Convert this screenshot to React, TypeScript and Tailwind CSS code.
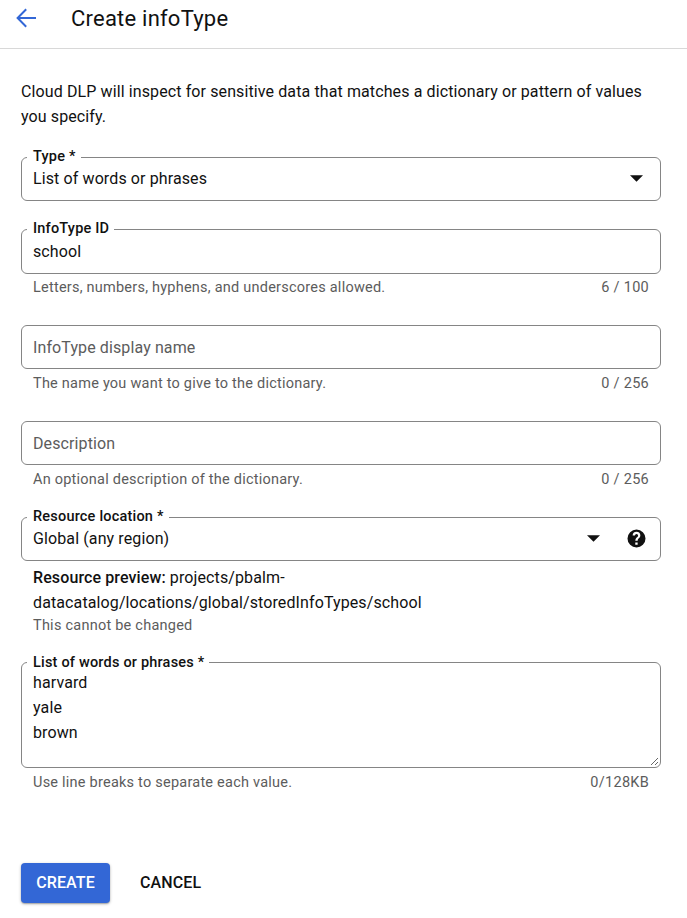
import type { ReactNode } from "react";

function Caret() {
  return (
    <svg width="13" height="7" viewBox="0 0 13 7" className="mb-px shrink-0 fill-[#111]">
      <path d="M0 0.3h13L6.5 6.7z" />
    </svg>
  );
}

type FieldProps = {
  label?: string;
  labelTop?: string;
  className: string;
  children: ReactNode;
};

function Field({ label, labelTop = "-top-[11px]", className, children }: FieldProps) {
  return (
    <div className={`relative rounded-[6px] border border-[#858585] pl-[11px] ${className}`}>
      {label && (
        <span
          className={`absolute left-[5px] bg-white pr-[5px] pl-1.5 text-[14.5px] leading-5 font-medium tracking-[0.2px] whitespace-nowrap ${labelTop}`}
        >
          {label}
        </span>
      )}
      {children}
    </div>
  );
}

function Hint({ left, right, className = "pt-1" }: { left: string; right: string; className?: string }) {
  return (
    <div className={`flex h-[25px] items-center justify-between px-3 text-[14.5px] text-[#5c5c5c] ${className}`}>
      <span className="tracking-[0.23px]">{left}</span>
      <span className="tracking-[0.28px]">{right}</span>
    </div>
  );
}

export default function App() {
  return (
    <div className="flex h-[918px] w-[687px] flex-col overflow-hidden bg-white font-[Roboto,sans-serif] text-[16px] tracking-[0.11px] text-[#111]">
      <header className="flex h-[49px] shrink-0 items-start border-b border-[#d8d8d8] pl-4">
        <svg width="21" height="20" viewBox="0 0 21 20" className="mt-2 fill-none stroke-[#3367d6] stroke-2">
          <path d="M20 10H2M10.2 1.2L1.6 10l8.6 8.8" />
        </svg>
        <h1 className="ml-[34px] pt-1 text-[22px] leading-[30px] tracking-[0.22px]">Create infoType</h1>
      </header>

      <main className="flex flex-col pt-[30px] pr-[26px] pl-[21px]">
        <p className="leading-[25px] whitespace-nowrap">
          Cloud DLP will inspect for sensitive data that matches a dictionary or pattern of values
          <br />
          you specify.
        </p>

        <Field label="Type *" className="mt-7 flex h-11 items-center justify-between pr-[17px]">
          <span>List of words or phrases</span>
          <Caret />
        </Field>

        <Field label="InfoType ID" className="mt-7 flex h-[45px] items-center">
          <span>school</span>
        </Field>
        <Hint left="Letters, numbers, hyphens, and underscores allowed." right="6 / 100" className="pt-0.5" />

        <Field className="mt-[26px] flex h-11 items-center pt-0.5 text-[#5c5c5c]">
          <span>InfoType display name</span>
        </Field>
        <Hint left="The name you want to give to the dictionary." right="0 / 256" />

        <Field className="mt-[27px] flex h-11 items-center pt-0.5 text-[#5c5c5c]">
          <span>Description</span>
        </Field>
        <Hint left="An optional description of the dictionary." right="0 / 256" />

        <Field label="Resource location *" className="mt-[27px] flex h-11 items-center pr-[13px]">
          <span className="flex-1">Global (any region)</span>
          <Caret />
          <svg width="21" height="21" viewBox="0 0 24 24" className="mb-px ml-[26px] fill-[#111]">
            <path d="M12 1.7a10.3 10.3 0 1 0 0 20.6 10.3 10.3 0 0 0 0-20.6zm1.3 17.3h-2.7v-2.5h2.7V19zm2.3-8.2l-.95.97c-.76.77-1.3 1.4-1.3 2.93h-2.7v-.55c0-1.15.53-2.18 1.3-2.95l1.4-1.32c.38-.36.5-.77.5-1.23a1.8 1.8 0 0 0-3.6 0H7.6a4.4 4.4 0 0 1 8.8 0c0 .9-.3 1.55-.8 2.15z" />
          </svg>
        </Field>

        <div className="flex flex-col px-3 pt-1">
          <p className="leading-[25px]">
            <b className="font-medium">Resource preview:</b> projects/pbalm-
            <br />
            datacatalog/locations/global/storedInfoTypes/school
          </p>
          <p className="mt-px text-[14.5px] leading-5 tracking-[0.24px] text-[#5c5c5c]">This cannot be changed</p>
        </div>

        <Field
          label="List of words or phrases *"
          labelTop="-top-2.5"
          className="mt-[26px] h-[106px] pt-[7px]"
        >
          <p className="leading-[25px]">
            harvard
            <br />
            yale
            <br />
            brown
          </p>
          <svg
            width="9"
            height="9"
            viewBox="0 0 9 9"
            className="absolute right-px bottom-px fill-none stroke-[#555] stroke-[0.9]"
          >
            <path d="M1 8L8 1M5 8l3-3" />
          </svg>
        </Field>
        <Hint left="Use line breaks to separate each value." right="0/128KB" />

        <div className="mt-[70px] flex h-10 items-center text-[16px] font-medium tracking-[0.12px]">
          <button className="h-10 w-[89px] rounded-[4px] bg-[#3367d6] text-white shadow-[0_1px_3px_rgba(0,0,0,0.3),0_1px_1px_rgba(0,0,0,0.15)]">
            CREATE
          </button>
          <button className="ml-[30px]">CANCEL</button>
        </div>
      </main>
    </div>
  );
}
